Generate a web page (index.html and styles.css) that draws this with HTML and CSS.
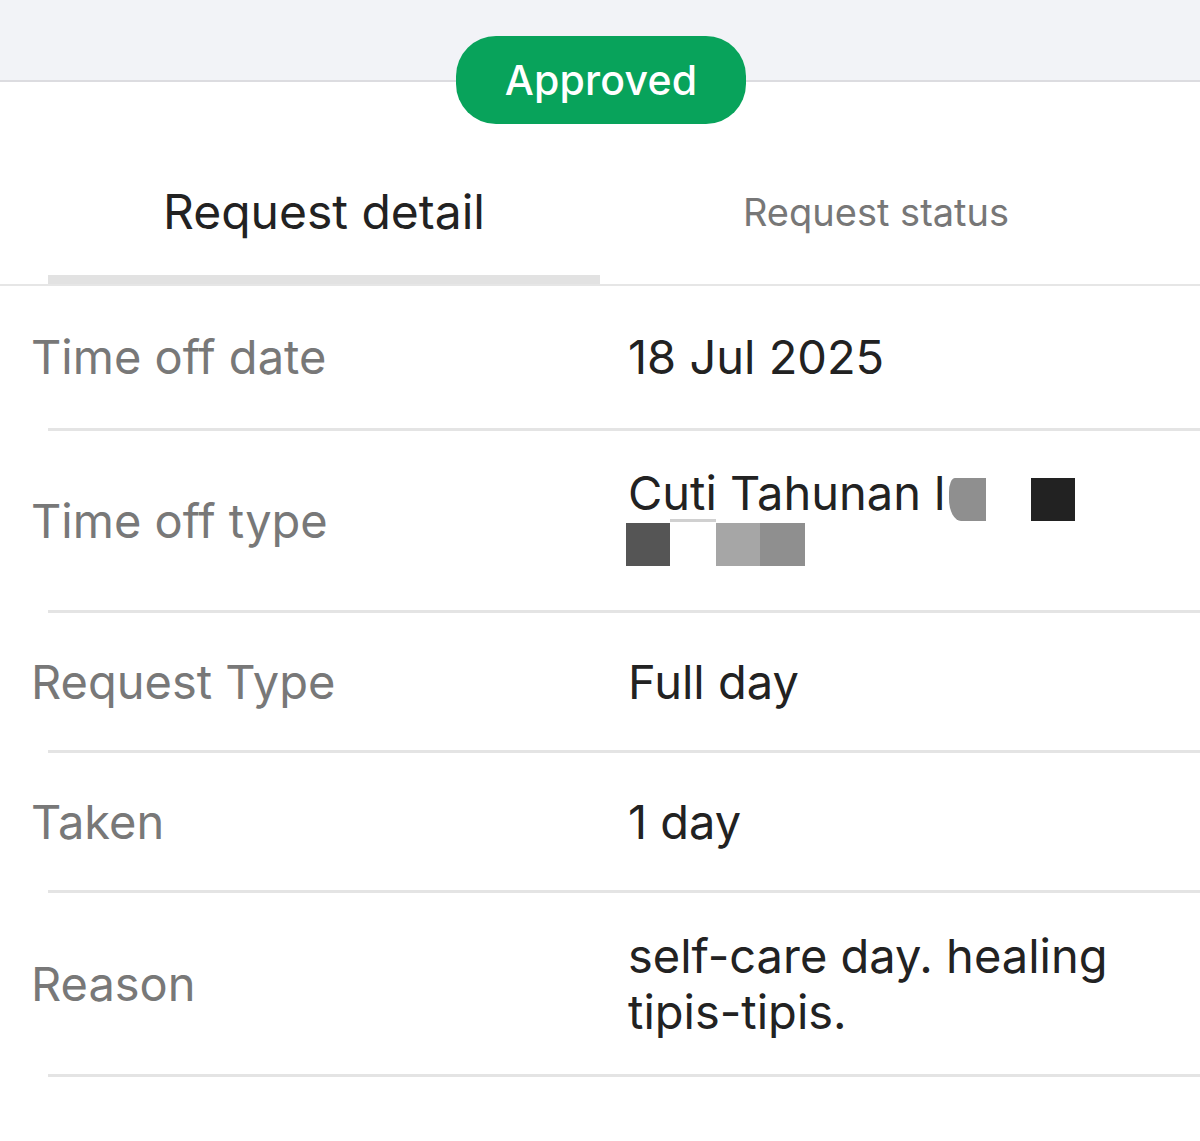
FILE: index.html
```html
<!DOCTYPE html>
<html lang="en">
<head>
<meta charset="utf-8">
<title>Request detail</title>
<link rel="stylesheet" href="styles.css">
</head>
<body>
<div class="page">
  <header class="topbar">
    <span class="badge">Approved</span>
  </header>
  <nav class="tabs-wrap">
    <div class="tabs">
      <div class="tab tab-active"><span class="tab-text">Request detail</span></div>
      <div class="tab"><span class="tab-text">Request status</span></div>
    </div>
  </nav>
  <section class="list">
    <div class="row row-first">
      <div class="label">Time off date</div>
      <div class="value">18 Jul 2025</div>
    </div>
    <div class="row row-double">
      <div class="label">Time off type</div>
      <div class="value">
        <div class="line">Cuti Tahunan l<span class="blk blk-a"></span><span class="blk blk-b"></span></div>
        <div class="line line-blocks"><span class="blk blk-c"></span><span class="blk blk-gap"></span><span class="blk blk-d"></span><span class="blk blk-e"></span></div>
      </div>
    </div>
    <div class="row row-single">
      <div class="label">Request Type</div>
      <div class="value">Full day</div>
    </div>
    <div class="row row-single">
      <div class="label">Taken</div>
      <div class="value">1 day</div>
    </div>
    <div class="row row-double row-last">
      <div class="label">Reason</div>
      <div class="value">
        <div class="line">self-care day. healing</div>
        <div class="line">tipis-tipis.</div>
      </div>
    </div>
  </section>
</div>
</body>
</html>
```
FILE: styles.css
```css
* { box-sizing: border-box; }
html, body { margin: 0; padding: 0; background: #ffffff; }
body {
  font-family: Inter, "Noto Sans", "Liberation Sans", sans-serif;
  color: #222222;
  width: 1200px;
  height: 1141px;
  overflow: hidden;
}
.page { width: 1200px; }

.topbar {
  position: relative;
  height: 82px;
  background: #f2f3f7;
  border-bottom: 2px solid #dcdce0;
}
.badge {
  position: absolute;
  left: 456px;
  top: 36px;
  width: 290px;
  height: 88px;
  border-radius: 40px;
  background: #08a35b;
  color: #ffffff;
  font-size: 41px;
  font-weight: 500;
  display: flex;
  align-items: center;
  justify-content: center;
  letter-spacing: 0.2px;
  z-index: 2;
}

.tabs-wrap {
  padding: 0 48px;
  border-bottom: 2px solid #e6e6e6;
}
.tabs {
  display: grid;
  grid-template-columns: 1fr 1fr;
}
.tab {
  height: 202px;
  padding-top: 102px;
  display: flex;
  justify-content: center;
  border-bottom: 9px solid transparent;
}
.tab-active { border-bottom-color: #e2e2e2; }
.tab-text {
  line-height: 56px;
  height: 56px;
  font-size: 38px;
  color: #777777;
}
.tab-active .tab-text {
  font-size: 48px;
  color: #222222;
}

.list { margin-left: 48px; }
.row {
  display: grid;
  grid-template-columns: 580px 1fr;
  align-items: center;
  border-bottom: 3px solid #e4e4e4;
}
.row-first { height: 145px; }
.row-single { height: 140px; }
.row-double { height: 182px; }
.row-last { height: 184px; }
.label {
  margin-left: -17px;
  font-size: 47px;
  color: #787878;
  line-height: 56px;
}
.value {
  font-size: 47px;
  color: #222222;
  line-height: 56px;
}
.line { height: 56px; white-space: nowrap; }
.blk {
  display: inline-block;
  vertical-align: top;
  height: 43px;
}
.blk-a {
  width: 37px;
  margin-left: 3px;
  margin-top: 13px;
  background: #8f8f8f;
  border-top-left-radius: 6px 14px;
  border-bottom-left-radius: 12px 22px;
}
.blk-b {
  width: 44px;
  margin-left: 45px;
  margin-top: 13px;
  background: #222222;
}
.line-blocks { display: flex; align-items: flex-start; }
.line-blocks .blk { margin-top: 2px; height: 43px; }
.blk-c { width: 44px; margin-left: -2px; background: #555555; }
.blk-gap { width: 46px; height: 3px !important; margin-top: -2px !important; background: #d0d0d0; }
.blk-d { width: 44px; background: #a6a6a6; }
.blk-e { width: 45px; background: #8f8f8f; }
```
